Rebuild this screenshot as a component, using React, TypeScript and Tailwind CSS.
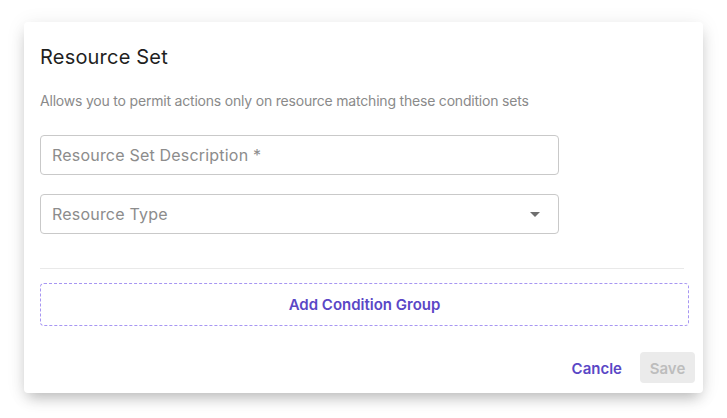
import { FC } from 'react';

const Field: FC<{ label: string; select?: boolean }> = ({ label, select }) => {
    return (
        <div className="flex h-10 w-[519px] items-center justify-between rounded border border-[#c9c9c9] pl-[11px] pr-[18px]">
            <span className="text-[16px] tracking-[0.2px] text-[#8c8c8c]">{label}</span>
            {select && (
                <svg width="10" height="5" viewBox="0 0 10 5">
                    <path d="M0 0h10L5 5z" fill="#6f6f6f" />
                </svg>
            )}
        </div>
    );
};

export default function App() {
    return (
        <div
            className="h-[418px] w-[727px] bg-white pl-6 pt-[22px]"
            style={{ fontFamily: 'Inter, "Noto Sans", sans-serif' }}
        >
            <div className="flex w-[679px] flex-col rounded bg-white pl-4 pr-[14px] pb-[10px] pt-[21px] shadow-[0_8px_14px_-4px_rgba(0,0,0,0.25),0_2px_20px_0_rgba(0,0,0,0.08)]">
                <h2 className="text-[20px] leading-7 tracking-[0.2px] text-[#1f1f1f]">
                    Resource Set
                </h2>
                <p className="mt-5 text-[14px] leading-5 tracking-[-0.2px] text-[#8a8a8a]">
                    Allows you to permit actions only on resource matching these condition sets
                </p>
                <div className="mt-6">
                    <Field label="Resource Set Description *" />
                </div>
                <div className="mt-[19px]">
                    <Field label="Resource Type" select />
                </div>
                <div className="mt-[34px] mr-[5px] h-px bg-[#e9e9e9]" />
                <button className="mt-[14px] flex h-[43px] items-center justify-center rounded border border-dashed border-[#a796f2] pt-px text-[15px] font-semibold text-[#5a47c6]">
                    Add Condition Group
                </button>
                <div className="mt-[26px] -mr-[6px] flex items-center justify-end gap-[18px]">
                    <button className="pt-[3px] text-[15px] font-semibold text-[#5a47c6]">Cancle</button>
                    <button className="h-[31px] w-[55px] rounded bg-[#ebebeb] pt-[3px] text-[15px] font-semibold text-[#bdbdbd]">
                        Save
                    </button>
                </div>
            </div>
        </div>
    );
}
